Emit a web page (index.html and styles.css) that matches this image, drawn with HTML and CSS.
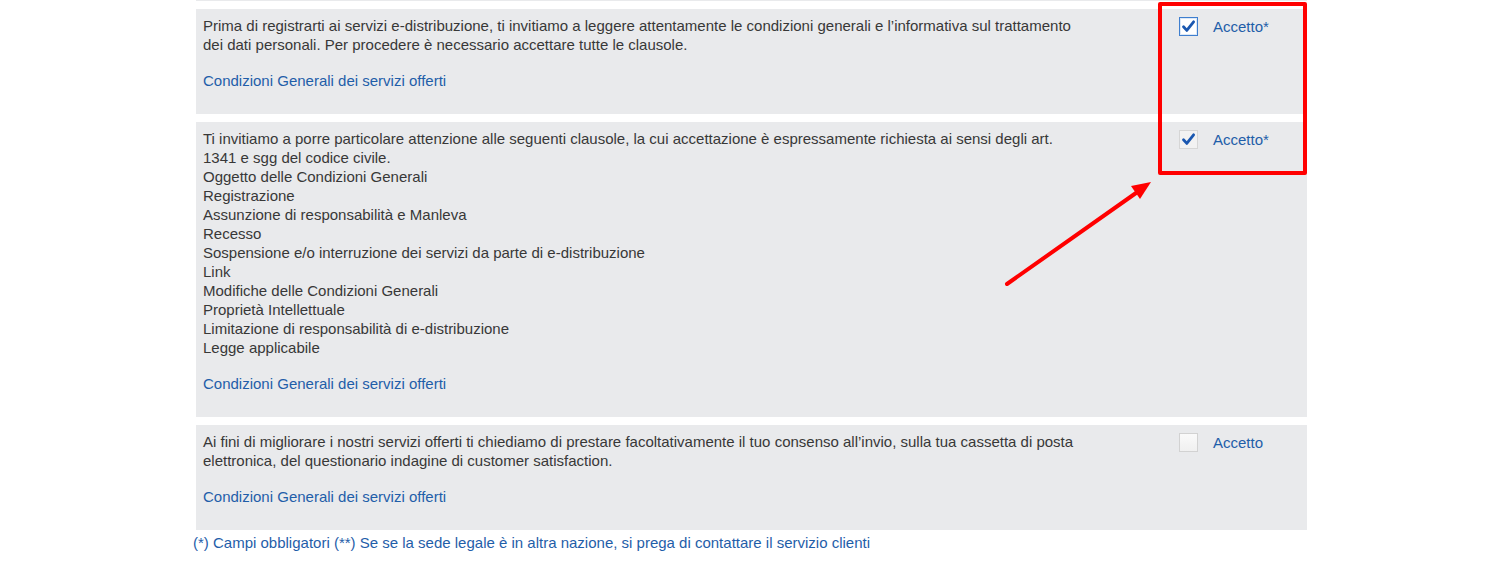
FILE: index.html
```html
<!DOCTYPE html>
<html lang="it">
<head>
  <meta charset="UTF-8">
  <meta name="viewport" content="width=device-width, initial-scale=1.0">
  <title>Registrazione - Condizioni</title>
  <link rel="stylesheet" href="styles.css">
</head>
<body>
  <div class="terms">
    <div class="panel panel-prev"></div>

    <div class="panel">
      <div class="terms-text">
        <p>Prima di registrarti ai servizi e-distribuzione, ti invitiamo a leggere attentamente le condizioni generali e l’informativa sul trattamento dei dati personali. Per procedere è necessario accettare tutte le clausole.</p>
        <p><a href="#">Condizioni Generali dei servizi offerti</a></p>
      </div>
      <label class="terms-check">
        <span class="box box-checked">
          <svg viewBox="0 0 19 19" width="19" height="19"><path d="M4.5 9.8 L7.8 13.4 L14.6 4.8" fill="none" stroke="#1a57b0" stroke-width="2.8" stroke-linecap="round" stroke-linejoin="round"/></svg>
        </span>
        <span class="check-label">Accetto*</span>
      </label>
    </div>

    <div class="panel">
      <div class="terms-text">
        <p>Ti invitiamo a porre particolare attenzione alle seguenti clausole, la cui accettazione è espressamente richiesta ai sensi degli art.<br>
        1341 e sgg del codice civile.<br>
        Oggetto delle Condizioni Generali<br>
        Registrazione<br>
        Assunzione di responsabilità e Manleva<br>
        Recesso<br>
        Sospensione e/o interruzione dei servizi da parte di e-distribuzione<br>
        Link<br>
        Modifiche delle Condizioni Generali<br>
        Proprietà Intellettuale<br>
        Limitazione di responsabilità di e-distribuzione<br>
        Legge applicabile</p>
        <p><a href="#">Condizioni Generali dei servizi offerti</a></p>
      </div>
      <label class="terms-check">
        <span class="box box-locked">
          <svg viewBox="0 0 19 19" width="19" height="19"><path d="M4.5 9.8 L7.8 13.4 L14.6 4.8" fill="none" stroke="#1a57b0" stroke-width="2.8" stroke-linecap="round" stroke-linejoin="round"/></svg>
        </span>
        <span class="check-label">Accetto*</span>
      </label>
    </div>

    <div class="panel">
      <div class="terms-text">
        <p>Ai fini di migliorare i nostri servizi offerti ti chiediamo di prestare facoltativamente il tuo consenso all’invio, sulla tua cassetta di posta elettronica, del questionario indagine di customer satisfaction.</p>
        <p><a href="#">Condizioni Generali dei servizi offerti</a></p>
      </div>
      <label class="terms-check">
        <span class="box"></span>
        <span class="check-label">Accetto</span>
      </label>
    </div>

    <p class="terms-note">(*) Campi obbligatori (**) Se se la sede legale è in altra nazione, si prega di contattare il servizio clienti</p>
  </div>

  <!-- annotation drawn over the screenshot -->
  <div class="highlight-box"></div>
  <svg class="highlight-arrow" width="1500" height="570" viewBox="0 0 1500 570">
    <line x1="1007" y1="284" x2="1136" y2="193" stroke="#ff0000" stroke-width="4" stroke-linecap="round"/>
    <polygon points="1151,182 1131,186 1140,199" fill="#ff0000"/>
  </svg>
</body>
</html>
```

FILE: styles.css
```css
body {
  margin: 0;
  font-family: "Liberation Sans", Arial, sans-serif;
  font-size: 15px;
  line-height: 19px;
  color: #383838;
  background: #fff;
}
a {
  color: #1f5ea9;
  text-decoration: none;
}
p {
  margin: 0;
}
.terms {
  width: 1111px;
  margin-left: 196px;
  display: flex;
  flex-direction: column;
  gap: 8px;
}
.panel {
  display: flex;
  align-items: flex-start;
  background: #e9eaec;
  padding: 7px 0 24px 7px;
}
.panel-prev {
  height: 2px;
  padding: 0;
  margin-top: -1px;
}
.terms-text {
  flex: 0 0 880px;
  display: flex;
  flex-direction: column;
  gap: 17px;
}
.terms-check {
  margin-left: 96px;
  margin-top: 1px;
  display: flex;
  align-items: center;
  gap: 15px;
  cursor: pointer;
}
.box {
  width: 19px;
  height: 19px;
  box-sizing: border-box;
  border: 1px solid #d2d2d2;
  background: linear-gradient(#fafafa, #f0f0f0);
  display: flex;
  align-items: center;
  justify-content: center;
}
.box svg {
  display: block;
  flex: none;
}
.box-checked {
  border: 1px solid #3f7fcf;
  background: #fff;
  box-shadow: inset 0 0 0 1px #dce8f7;
}
.box-locked {
  border: 1px solid #d6d6d6;
  background: #f2f2f2;
}
.check-label {
  color: #1f5ea9;
  line-height: 19px;
}
.terms-note {
  margin: -5px 0 0 -3px;
  color: #1f5ea9;
}
.highlight-box {
  position: absolute;
  left: 1158px;
  top: 2px;
  width: 149px;
  height: 173px;
  box-sizing: border-box;
  border: 4px solid #ff0000;
  border-radius: 2px;
}
.highlight-arrow {
  position: absolute;
  left: 0;
  top: 0;
  pointer-events: none;
}
```
